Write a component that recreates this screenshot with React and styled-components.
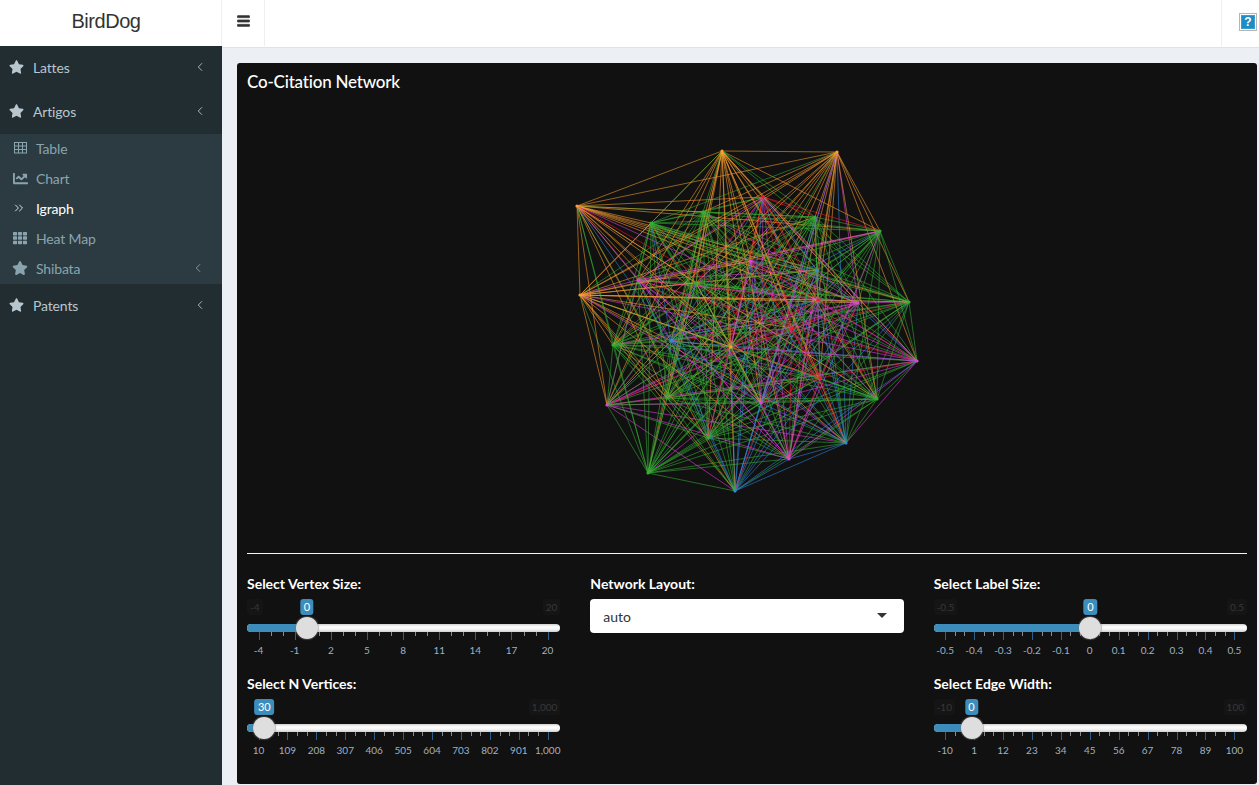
import React from "react";
import styled, { createGlobalStyle } from "styled-components";
import { FaStar, FaTh, FaBars, FaChartLine } from "react-icons/fa";
import { ChevronLeft, ChevronsRight } from "lucide-react";

const GlobalStyle = createGlobalStyle`
  html, body {
    margin: 0;
    height: 100%;
    background: #ecf0f5;
  }
  body {
    font-family: "Lato", "Noto Sans", sans-serif;
    font-size: 14px;
    overflow: hidden;
  }
`;

const Page = styled.div`
  display: flex;
  height: 785px;
`;

const SideColumn = styled.aside`
  width: 222px;
  flex-shrink: 0;
  display: flex;
  flex-direction: column;
  background: #222d32;
`;

const Brand = styled.div`
  height: 46px;
  background: #fff;
  color: #333;
  font-family: "Liberation Sans", sans-serif;
  font-size: 20px;
  letter-spacing: -0.45px;
  display: flex;
  align-items: center;
  justify-content: center;
  box-sizing: border-box;
  padding: 0 10px 3px 0;
`;

const Menu = styled.ul`
  list-style: none;
  margin: 0;
  padding: 0;
`;

const MenuRow = styled.li`
  height: 44px;
  box-sizing: border-box;
  display: flex;
  align-items: center;
  padding: 0 15px 2px 9px;
  color: #b8c7ce;
  font-size: 14px;
  letter-spacing: -0.15px;
  svg.lead {
    width: 15px;
    height: 14px;
    margin-right: 9px;
  }
  svg.angle {
    margin-left: auto;
    width: 14px;
    height: 14px;
    margin-top: -1px;
  }
`;

const SubMenu = styled.ul`
  list-style: none;
  margin: 0;
  padding: 0;
  background: #2c3b41;
`;

const SubRow = styled.li`
  height: 30px;
  box-sizing: border-box;
  display: flex;
  align-items: center;
  padding: 0 17px 2px 12px;
  font-size: 14px;
  letter-spacing: -0.15px;
  color: ${({ $active }) => ($active ? "#fff" : "#8aa4af")};
  svg.lead {
    width: 16px;
    height: 14px;
    margin-right: 8px;
  }
  svg.chart {
    width: 17px;
    height: 15px;
    margin-right: 7px;
  }
  svg.double {
    width: 14px;
    height: 14px;
    margin: 0 10px 0 0;
  }
  svg.angle {
    margin-left: auto;
    width: 14px;
    height: 14px;
  }
`;

const MainColumn = styled.div`
  flex: 1;
  min-width: 0;
  display: flex;
  flex-direction: column;
`;

const Navbar = styled.header`
  height: 48px;
  box-sizing: border-box;
  background: #fff;
  border-bottom: 1px solid #dfe3e8;
  display: flex;
`;

const Toggle = styled.div`
  width: 44px;
  height: 46px;
  box-sizing: border-box;
  border-left: 1px solid #eee;
  border-right: 1px solid #eee;
  margin-left: -1px;
  display: flex;
  align-items: center;
  justify-content: center;
  color: #333;
  svg {
    width: 13px;
    height: 14px;
    margin-top: -4px;
    stroke: currentColor;
    stroke-width: 28;
  }
`;

const HelpCell = styled.div`
  margin-left: auto;
  width: 38px;
  height: 46px;
  box-sizing: border-box;
  border-left: 1px solid #eee;
  padding: 13px 0 0 17px;
`;

const HelpIcon = styled.div`
  width: 18px;
  height: 18px;
  box-sizing: border-box;
  border: 1px solid #b5b5b5;
  padding: 1px;
  background: #fff;
  span {
    display: block;
    height: 14px;
    background: #1f8dc4;
    box-shadow: inset 0 0 0 1px #3a9fd0;
    color: #fff;
    font: bold 12px/14px "Liberation Sans", sans-serif;
    text-align: center;
  }
`;

const Content = styled.main`
  flex: 1;
  padding: 15px 2px 1px 15px;
  display: flex;
  min-height: 0;
`;

const Box = styled.section`
  flex: 1;
  background: #111;
  border-radius: 3px;
  padding: 0 10px;
  color: #fff;
  display: flex;
  flex-direction: column;
`;

const BoxTitle = styled.h3`
  margin: 0;
  height: 37px;
  line-height: 37px;
  font-size: 17px;
  letter-spacing: -0.2px;
  font-weight: 500;
  color: #fff;
`;

const GraphCanvas = styled.svg`
  display: block;
  width: 1000px;
  height: 453px;
  flex-shrink: 0;
`;

const Rule = styled.hr`
  margin: 0;
  border: 0;
  border-top: 1px solid #f4f4f4;
`;

const Controls = styled.div`
  display: grid;
  grid-template-columns: repeat(3, 1fr);
  column-gap: 30px;
  padding-top: 20px;
`;

const Column = styled.div`
  display: flex;
  flex-direction: column;
  gap: 20px;
`;

const Label = styled.label`
  display: block;
  font-size: 14px;
  font-weight: 700;
  line-height: 20px;
  height: 20px;
  color: #fff;
`;

const SliderWrap = styled.div`
  height: 80px;
`;

const SliderBody = styled.div`
  position: relative;
  height: 60px;
`;

const Limits = styled.div`
  display: flex;
  justify-content: space-between;
  padding: 5px 0 0;
  height: 30px;
  box-sizing: border-box;
  font-size: 10px;
  line-height: 16px;
  color: #383838;
  span {
    height: 16px;
    padding: 0 3px;
    border-radius: 3px;
    background: #151515;
  }
`;

const Track = styled.div`
  height: 8px;
  border-radius: 4px;
  background: linear-gradient(#cfcfcf, #fff 35%, #f2f2f2 70%, #cfcfcf);
  overflow: hidden;
`;

const TrackFill = styled.div`
  height: 100%;
  background: #3c8dbc;
`;

const Handle = styled.div`
  position: absolute;
  top: 23px;
  width: 22px;
  height: 22px;
  margin-left: -11px;
  border-radius: 50%;
  background: #dedede;
  box-shadow: 0 0 1px 1px rgba(120, 120, 120, 0.45);
`;

const Bubble = styled.div`
  position: absolute;
  top: 5px;
  transform: translateX(-50%);
  background: #3c8dbc;
  color: #fff;
  border-radius: 3px;
  padding: 0 3.5px;
  font-size: 11px;
  line-height: 16px;
  height: 16px;
`;

const Ticks = styled.div`
  display: flex;
  justify-content: space-between;
  padding: 0 11.5px;
`;

const Tick = styled.div`
  width: 1px;
  height: ${({ $major }) => ($major ? "8px" : "4px")};
  background: ${({ $major }) => ($major ? "#2f5f86" : "#8a8a8a")};
  position: relative;
  span {
    position: absolute;
    top: 11px;
    left: 0;
    transform: translateX(-50%);
    font-size: 10px;
    line-height: 14px;
    color: #9fb1c2;
    white-space: nowrap;
  }
`;

const SelectBox = styled.div`
  height: 34px;
  box-sizing: border-box;
  margin-top: 5px;
  background: #fff;
  border-radius: 4px;
  display: flex;
  align-items: center;
  justify-content: space-between;
  padding: 0 17px 0 13px;
  color: #333;
  font-size: 14px;
`;

const Caret = styled.span`
  width: 0;
  height: 0;
  border-left: 5px solid transparent;
  border-right: 5px solid transparent;
  border-top: 5px solid #333;
  margin-top: -2px;
`;

function TableIcon() {
  return (
    <svg className="lead" viewBox="0 0 16 14" fill="none" stroke="currentColor" strokeWidth="1">
      <rect x="2.5" y="1.5" width="12" height="10.5" />
      <path d="M2.5 5h12M2.5 8.5h12M6.5 1.5v10.5M10.5 1.5v10.5" />
    </svg>
  );
}

const NODE_COLORS = {
  o: "#ff9f2e",
  g: "#33b033",
  b: "#2f8ae0",
  m: "#e63fe0",
  r: "#ff1030",
};
const PRIORITY = { o: 0, g: 1, b: 2, m: 3, r: 4 };

// [x, y, group, weight]: a smaller weight takes more of its edges
const NODES = [
  [722, 151, "o"], [837, 152, "o"], [577, 206, "o"], [580, 295, "o"], [731, 347, "o", 3.5],
  [763, 197, "r", 3.5], [792, 328, "r", 1.5], [820, 378, "r", 1.5], [818, 300, "r", 3],
  [703, 212, "g"], [651, 223, "g"], [815, 217, "g"], [880, 231, "g"], [909, 302, "g"],
  [613, 345, "g"], [667, 398, "g"], [877, 399, "g"], [708, 438, "g"], [648, 473, "g"], [696, 283, "g"],
  [638, 280, "m", 1.5], [751, 261, "m"], [858, 303, "m", 2.5], [917, 361, "m"], [607, 405, "m", 1.5], [761, 403, "m", 2.5], [789, 459, "m", 1.5],
  [817, 270, "b"], [671, 341, "b", 1.5], [846, 443, "b"], [735, 491, "b", 1.5],
];

// the graph sits 100px down the page and 247px in
const OFFSET_X = 247;
const OFFSET_Y = 100;

const weightOf = (n) => (n[3] !== undefined ? n[3] : PRIORITY[n[2]]);

function buildEdges() {
  let seed = 1234;
  const rand = () => {
    seed = (seed * 16807) % 2147483647;
    return seed / 2147483647;
  };
  const edges = [];
  NODES.forEach((a, i) => {
    NODES.forEach((b, j) => {
      if (j <= i) return;
      const first = weightOf(a) <= weightOf(b) ? a : b;
      const second = first === a ? b : a;
      const from = rand() < 0.2 ? second : first;
      edges.push({ a, b, group: from[2], key: `${i}-${j}`, order: rand() });
    });
  });
  return edges.sort((p, q) => p.order - q.order);
}

const EDGES = buildEdges();

function NetworkGraph() {
  return (
    <GraphCanvas viewBox="0 0 1000 453">
      {EDGES.map(({ a, b, group, key }) => (
        <line
          key={key}
          x1={a[0] - OFFSET_X}
          y1={a[1] - OFFSET_Y}
          x2={b[0] - OFFSET_X}
          y2={b[1] - OFFSET_Y}
          stroke={NODE_COLORS[group]}
          strokeWidth="0.75"
          strokeOpacity="0.75"
        />
      ))}
      {NODES.map(([x, y, c], i) => (
        <circle key={i} cx={x - OFFSET_X} cy={y - OFFSET_Y} r="1.6" fill={NODE_COLORS[c]} />
      ))}
    </GraphCanvas>
  );
}

function Slider({ label, min, max, value, fraction, ticks }) {
  const left = `calc(11.5px + (100% - 23px) * ${fraction})`;
  const items = [];
  ticks.forEach((t, i) => {
    items.push(
      <Tick $major key={t}>
        <span>{t}</span>
      </Tick>
    );
    if (i < ticks.length - 1) {
      items.push(<Tick key={`${t}a`} />, <Tick key={`${t}b`} />);
    }
  });
  return (
    <SliderWrap>
      <Label>{label}</Label>
      <SliderBody>
        <Limits>
          <span style={{ visibility: min ? "visible" : "hidden" }}>{min}</span>
          <span>{max}</span>
        </Limits>
        <Track>
          <TrackFill style={{ width: left }} />
        </Track>
        <Ticks>{items}</Ticks>
        <Bubble style={{ left }}>{value}</Bubble>
        <Handle style={{ left }} />
      </SliderBody>
    </SliderWrap>
  );
}

export default function App() {
  return (
    <Page>
      <GlobalStyle />
      <SideColumn>
        <Brand>BirdDog</Brand>
        <Menu>
          <MenuRow>
            <FaStar className="lead" />
            Lattes
            <ChevronLeft className="angle" strokeWidth={1.5} />
          </MenuRow>
          <MenuRow>
            <FaStar className="lead" />
            Artigos
            <ChevronLeft className="angle" strokeWidth={1.5} />
          </MenuRow>
          <SubMenu>
            <SubRow>
              <TableIcon />
              Table
            </SubRow>
            <SubRow>
              <FaChartLine className="chart" />
              Chart
            </SubRow>
            <SubRow $active>
              <ChevronsRight className="double" strokeWidth={1.4} />
              Igraph
            </SubRow>
            <SubRow>
              <FaTh className="lead" />
              Heat Map
            </SubRow>
            <SubRow>
              <FaStar className="lead" />
              Shibata
              <ChevronLeft className="angle" strokeWidth={1.5} />
            </SubRow>
          </SubMenu>
          <MenuRow>
            <FaStar className="lead" />
            Patents
            <ChevronLeft className="angle" strokeWidth={1.5} />
          </MenuRow>
        </Menu>
      </SideColumn>
      <MainColumn>
        <Navbar>
          <Toggle>
            <FaBars />
          </Toggle>
          <HelpCell>
            <HelpIcon>
              <span>?</span>
            </HelpIcon>
          </HelpCell>
        </Navbar>
        <Content>
          <Box>
            <BoxTitle>Co-Citation Network</BoxTitle>
            <NetworkGraph />
            <Rule />
            <Controls>
              <Column>
                <Slider
                  label="Select Vertex Size:"
                  min="-4"
                  max="20"
                  value="0"
                  fraction={4 / 24}
                  ticks={[-4, -1, 2, 5, 8, 11, 14, 17, 20]}
                />
                <Slider
                  label="Select N Vertices:"
                  min=""
                  max="1,000"
                  value="30"
                  fraction={20 / 990}
                  ticks={[10, 109, 208, 307, 406, 505, 604, 703, 802, 901, "1,000"]}
                />
              </Column>
              <Column>
                <div>
                  <Label>Network Layout:</Label>
                  <SelectBox>
                    auto
                    <Caret />
                  </SelectBox>
                </div>
              </Column>
              <Column>
                <Slider
                  label="Select Label Size:"
                  min="-0.5"
                  max="0.5"
                  value="0"
                  fraction={0.5}
                  ticks={[-0.5, -0.4, -0.3, -0.2, -0.1, 0, 0.1, 0.2, 0.3, 0.4, 0.5]}
                />
                <Slider
                  label="Select Edge Width:"
                  min="-10"
                  max="100"
                  value="0"
                  fraction={10 / 110}
                  ticks={[-10, 1, 12, 23, 34, 45, 56, 67, 78, 89, 100]}
                />
              </Column>
            </Controls>
          </Box>
        </Content>
      </MainColumn>
    </Page>
  );
}
